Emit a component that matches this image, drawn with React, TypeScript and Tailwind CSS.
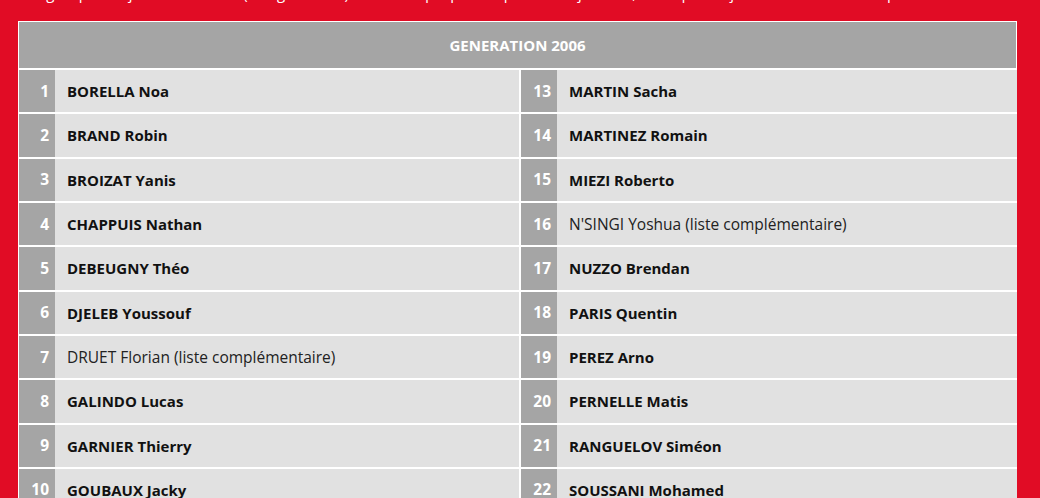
import React from "react";

const left: [number, string, boolean][] = [
  [1, "BORELLA Noa", true],
  [2, "BRAND Robin", true],
  [3, "BROIZAT Yanis", true],
  [4, "CHAPPUIS Nathan", true],
  [5, "DEBEUGNY Théo", true],
  [6, "DJELEB Youssouf", true],
  [7, "DRUET Florian (liste complémentaire)", false],
  [8, "GALINDO Lucas", true],
  [9, "GARNIER Thierry", true],
  [10, "GOUBAUX Jacky", true],
];
const right: [number, string, boolean][] = [
  [13, "MARTIN Sacha", true],
  [14, "MARTINEZ Romain", true],
  [15, "MIEZI Roberto", true],
  [16, "N'SINGI Yoshua (liste complémentaire)", false],
  [17, "NUZZO Brendan", true],
  [18, "PARIS Quentin", true],
  [19, "PEREZ Arno", true],
  [20, "PERNELLE Matis", true],
  [21, "RANGUELOV Siméon", true],
  [22, "SOUSSANI Mohamed", true],
];

function Row({ n, name, bold, nameW }: { n: number; name: string; bold: boolean; nameW: string }) {
  return (
    <div className="flex h-[42.33px]">
      <div className="w-[36px] bg-[#a5a5a5] flex items-center justify-end pr-[6px] text-white font-bold text-[15.5px]">
        {n}
      </div>
      <div
        className={`${nameW} bg-[#e1e1e1] flex items-center pl-[12px] ${bold ? "font-bold text-[15px] text-[#111]" : "font-normal text-[15.5px] text-[#222]"}`}
      >
        {name}
      </div>
    </div>
  );
}

export default function App() {
  return (
    <div
      className="w-[1040px] h-[498px] overflow-hidden bg-[#e10c25]"
      style={{ fontFamily: '"Open Sans", "Noto Sans", sans-serif' }}
    >
      <p className="text-white text-[15px] leading-[20px] mt-[-17px] mb-[18px] pl-[26px] whitespace-nowrap">
        Le groupe des joueurs retenus (catégorie U15) est convoqué pour la prochaine journée, ainsi que les joueurs de la liste complémentaire.
      </p>
      <div className="pl-[18px]">
        <div className="w-[999px] border border-white bg-white">
          <div className="h-[46px] bg-[#a5a5a5] flex items-center justify-center text-white font-bold text-[15px]">
            GENERATION 2006
          </div>
          <div className="flex gap-[2px] pt-[2px] bg-white">
            <div className="flex flex-col gap-[2px]">
              {left.map(([n, name, b]) => (
                <Row key={n} n={n} name={name} bold={b} nameW="w-[464px]" />
              ))}
            </div>
            <div className="flex flex-col gap-[2px]">
              {right.map(([n, name, b]) => (
                <Row key={n} n={n} name={name} bold={b} nameW="w-[460px]" />
              ))}
            </div>
          </div>
        </div>
      </div>
    </div>
  );
}
